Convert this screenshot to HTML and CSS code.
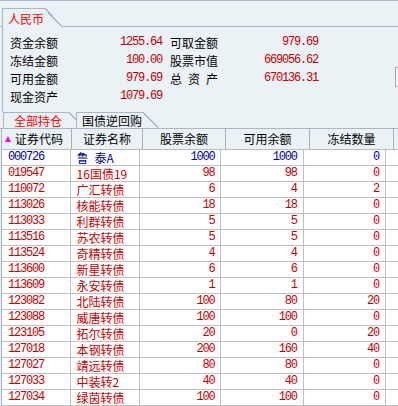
FILE: index.html
```html
<!DOCTYPE html>
<html>
<head>
    <title>资金股份</title>
    <link rel="stylesheet" href="styles.css">
</head>
<body>
    <div class="tabs">
        <div class="tab">人民币</div>
    </div>
    <div class="summary">
        <div class="sum-grid">
            <div class="lab">资金余额</div><div class="val">1255.64</div>
            <div class="lab lab2">可取金额</div><div class="val">979.69</div>
            <div class="lab">冻结金额</div><div class="val">100.00</div>
            <div class="lab lab2">股票市值</div><div class="val">669056.62</div>
            <div class="lab">可用金额</div><div class="val">979.69</div>
            <div class="lab lab2">总&ensp;资&ensp;产</div><div class="val">670136.31</div>
            <div class="lab">现金资产</div><div class="val">1079.69</div>
        </div>
        <div class="peek"></div>
    </div>
    <div class="subtabs">
        <div class="subtab active">全部持仓</div>
        <div class="subtab">国债逆回购</div>
    </div>
    <div class="grid">
        <div class="row head">
            <div class="c c1 sort"><svg width="6" height="6" viewBox="0 0 6 6"><polygon points="3,0 6,6 0,6" fill="#ff00ff"/></svg><span>证券代码</span></div>
            <div class="c c2">证券名称</div>
            <div class="c c3">股票余额</div>
            <div class="c c4">可用余额</div>
            <div class="c c5">冻结数量</div>
            <div class="c c6"></div>
        </div>
        <div id="rows"></div>
    </div>

    <script>
        var data = [
            ['000726', '鲁\u2002泰A', 1000, 1000, 0, 'blue'],
            ['019547', '16国债19', 98, 98, 0],
            ['110072', '广汇转债', 6, 4, 2],
            ['113026', '核能转债', 18, 18, 0],
            ['113033', '利群转债', 5, 5, 0],
            ['113516', '苏农转债', 5, 5, 0],
            ['113524', '奇精转债', 4, 4, 0],
            ['113600', '新星转债', 6, 6, 0],
            ['113609', '永安转债', 1, 1, 0],
            ['123082', '北陆转债', 100, 80, 20],
            ['123088', '威唐转债', 100, 100, 0],
            ['123105', '拓尔转债', 20, 0, 20],
            ['127018', '本钢转债', 200, 160, 40],
            ['127027', '靖远转债', 80, 80, 0],
            ['127033', '中装转2', 40, 40, 0],
            ['127034', '绿茵转债', 100, 100, 0]
        ];
        var html = '';
        data.forEach(function(d) {
            html += '<div class="row ' + (d[5] || 'red') + '">' +
                '<div class="c c1 num">' + d[0] + '</div>' +
                '<div class="c c2">' + d[1] + '</div>' +
                '<div class="c c3 num n">' + d[2] + '</div>' +
                '<div class="c c4 num n">' + d[3] + '</div>' +
                '<div class="c c5 num n">' + d[4] + '</div>' +
                '<div class="c c6"></div></div>';
        });
        document.getElementById('rows').innerHTML = html;
    </script>
</body>
</html>
```

FILE: styles.css
```css
body {
    margin: 0;
    background-color: #ebf2f6;
    font-family: "Noto Sans CJK SC", sans-serif;
    font-size: 12px;
    color: #000;
    border-top: 1px solid #b0bccb;
    overflow: hidden;
    height: 405px;
}
.num {
    font-family: "Liberation Mono", monospace;
    font-size: 12px;
    letter-spacing: -1.2px;
}
.tabs {
    display: flex;
    align-items: flex-end;
    height: 25px;
    padding-left: 2px;
    border-bottom: 1px solid #a9b6c6;
}
.tab {
    position: relative;
    box-sizing: border-box;
    display: flex;
    align-items: center;
    height: 19px;
    margin-bottom: -1px;
    padding-left: 5px;
    border-left: 1px solid #a9b6c6;
    border-top: 1px solid #a9b6c6;
    background-color: #ebf2f6;
    color: #ff0000;
}
.tab::after {
    content: "";
    position: absolute;
    left: 100%;
    top: -1px;
    width: 18px;
    height: 19px;
    background: linear-gradient(to top right, #ebf2f6 48%, #a9b6c6 48%, #a9b6c6 54%, transparent 54%);
}
.summary {
    display: flex;
    box-sizing: border-box;
    height: 85px;
    margin-left: 2px;
    padding: 6px 0 0 7px;
    border-left: 1px solid #a9b6c6;
}
.sum-grid {
    display: grid;
    grid-template-columns: 56px 96px 64px 92px;
    grid-auto-rows: 18px;
    align-items: center;
    align-self: flex-start;
}
.lab2 {
    padding-left: 8px;
}
.val {
    text-align: right;
    color: #c80000;
    font-family: "Liberation Mono", monospace;
    font-size: 12px;
    letter-spacing: -1.2px;
}
.peek {
    width: 12px;
    height: 20px;
    box-sizing: border-box;
    margin: 34px -9px 0 auto;
    border: 1px solid #a8a8a8;
    background-color: #f4f4f4;
}
.subtabs {
    display: flex;
    height: 16px;
    padding-left: 3px;
    border-bottom: 1px solid #a9b6c6;
}
.subtab {
    position: relative;
    box-sizing: border-box;
    display: flex;
    align-items: center;
    height: 16px;
    padding-left: 5px;
    border-left: 1px solid #a9b6c6;
    border-top: 1px solid #a9b6c6;
    background-color: #ebf2f6;
}
.subtab::after {
    content: "";
    position: absolute;
    left: 100%;
    top: -1px;
    width: 16px;
    height: 16px;
    background: linear-gradient(to top right, #ebf2f6 47%, #a9b6c6 47%, #a9b6c6 54%, transparent 54%);
}
.subtab.active {
    padding: 0 6px 0 10px;
    color: #ff0000;
}
.subtab + .subtab {
    margin-left: 8px;
    z-index: 1;
}
.grid {
    margin-left: 1px;
    border-left: 1px solid #9fb3d0;
}
.row {
    display: flex;
    height: 16px;
    line-height: 15px;
    box-sizing: border-box;
    border-bottom: 1px solid #c0c0c0;
    background-color: #fff;
}
.row.head {
    height: 21px;
    line-height: 20px;
    background-color: #ebf2f6;
    border-bottom-color: #b4bcc6;
}
.c {
    box-sizing: border-box;
    border-right: 1px solid #c0c0c0;
    white-space: nowrap;
    overflow: hidden;
    padding: 0 6px;
}
.head .c {
    text-align: center;
    border-right-color: #a7b0bb;
    padding: 0;
}
.head .sort {
    display: flex;
    align-items: center;
    padding-left: 3px;
}
.sort span {
    margin-left: 4px;
}
.c1 { width: 70px; }
.c2 { width: 71px; }
.c3 { width: 83px; }
.c4 { width: 84px; }
.c5 { width: 84px; }
.c6 { flex: 1; border-right: none; }
.n {
    text-align: right;
}
.red {
    color: #c80000;
}
.blue {
    color: #0000a8;
}
```
